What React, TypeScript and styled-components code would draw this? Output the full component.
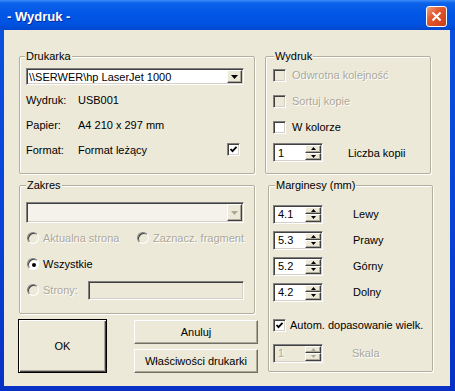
import React from "react";
import styled, { createGlobalStyle } from "styled-components";

const GlobalStyle = createGlobalStyle`
    html, body {
        margin: 0;
        padding: 0;
    }
    body {
        width: 455px;
        height: 391px;
        overflow: hidden;
        background: #ece9d8;
        font-family: "Liberation Sans", Arial, sans-serif;
        font-size: 11px;
        color: #000;
    }
`;

const Window = styled.div`
    width: 455px;
    height: 391px;
    display: flex;
    flex-direction: column;
    background: linear-gradient(to bottom, #0a52e0 0%, #0842d6 60%, #0731c4 100%);
`;

const TitleBar = styled.div`
    height: 30px;
    flex: none;
    display: flex;
    align-items: center;
    padding-left: 7px;
    background: linear-gradient(
        to bottom,
        #3c8cf8 0%,
        #0d62ea 10%,
        #0056e6 45%,
        #0053e0 80%,
        #0047cf 100%
    );
`;

const Title = styled.span`
    font-weight: bold;
    font-size: 13px;
    color: #fff;
    text-shadow: 1px 1px 0 #0a2a9a;
    margin-top: 2px;
`;

const CloseButton = styled.div`
    margin-left: auto;
    margin-right: 8px;
    width: 21px;
    height: 21px;
    box-sizing: border-box;
    border: 1px solid #fff;
    border-radius: 3px;
    background: linear-gradient(135deg, #f0a080 0%, #e3582d 40%, #c83c18 100%);
    display: flex;
    align-items: center;
    justify-content: center;
    margin-top: 2px;
`;

const Client = styled.div`
    flex: 1;
    margin: 0 5px 5px 4px;
    background: #ece9d8;
    display: flex;
    gap: 10px;
    padding: 26px 17px 0 15px;
`;

const LeftColumn = styled.div`
    width: 236px;
    display: flex;
    flex-direction: column;
`;

const RightColumn = styled.div`
    width: 168px;
    display: flex;
    flex-direction: column;
`;

const Group = styled.div<{ $h: number; $w?: number; $mt?: number; $ml?: number }>`
    position: relative;
    box-sizing: border-box;
    height: ${(p) => p.$h}px;
    width: ${(p) => (p.$w ? `${p.$w}px` : "auto")};
    margin-top: ${(p) => p.$mt ?? 0}px;
    margin-left: ${(p) => p.$ml ?? 0}px;
    border: 1px solid #b3af9f;
    border-radius: 2px;
    box-shadow: inset 1px 1px 0 #fff, 1px 1px 0 #fff;
    display: flex;
    flex-direction: column;
`;

const Legend = styled.span<{ $lx: number }>`
    position: absolute;
    top: -7px;
    left: ${(p) => p.$lx}px;
    padding: 0 1px;
    line-height: 13px;
    background: #ece9d8;
`;

const GroupBody = styled.div<{ $pad: string }>`
    padding: ${(p) => p.$pad};
    display: flex;
    flex-direction: column;
`;

const sunken = `
    border: 1px solid;
    border-color: #808080 #fff #fff #808080;
    box-shadow: inset 1px 1px 0 #404040, inset -1px -1px 0 #d4d0c8;
`;

const raised = `
    border: 1px solid;
    border-color: #fff #404040 #404040 #fff;
    box-shadow: inset -1px -1px 0 #aca899;
`;

const Combo = styled.div<{ $h: number; $disabled?: boolean }>`
    display: flex;
    height: ${(p) => p.$h}px;
    box-sizing: border-box;
    ${sunken}
    background: ${(p) => (p.$disabled ? "#f4f2ea" : "#fff")};
    padding: 1px;
`;

const ComboText = styled.span`
    flex: 1;
    display: flex;
    align-items: center;
    padding-left: 1px;
    white-space: nowrap;
`;

const ComboButton = styled.span`
    width: 15px;
    box-sizing: border-box;
    background: #ece9d8;
    ${raised}
    display: flex;
    align-items: center;
    justify-content: center;
`;

const InfoRow = styled.div<{ $mt?: number }>`
    height: 25px;
    display: flex;
    align-items: center;
    margin-top: ${(p) => p.$mt ?? 0}px;
`;

const InfoLabel = styled.span`
    width: 52px;
`;

const Row = styled.div<{ $h?: number; $mt?: number }>`
    height: ${(p) => p.$h ?? 26}px;
    margin-top: ${(p) => p.$mt ?? 0}px;
    display: flex;
    align-items: center;
`;

const Text = styled.span<{ $disabled?: boolean; $ml?: number }>`
    margin-left: ${(p) => p.$ml ?? 0}px;
    white-space: nowrap;
    color: ${(p) => (p.$disabled ? "#aca899" : "#000")};
    text-shadow: ${(p) => (p.$disabled ? "1px 1px 0 #fff" : "none")};
`;

const CheckBox = styled.span<{ $disabled?: boolean; $ml?: string; $mr?: number }>`
    width: 13px;
    height: 13px;
    flex: none;
    box-sizing: border-box;
    ${sunken}
    background: ${(p) => (p.$disabled ? "#ece9d8" : "#fff")};
    display: flex;
    align-items: center;
    justify-content: center;
    margin-left: ${(p) => p.$ml ?? "0"};
    margin-right: ${(p) => p.$mr ?? 0}px;
`;

const RadioCircle = styled.span<{ $disabled?: boolean }>`
    width: 12px;
    height: 12px;
    flex: none;
    box-sizing: border-box;
    border-radius: 50%;
    border: 1px solid;
    border-color: #808080 #fff #fff #808080;
    box-shadow: inset 1px 1px 0 #404040;
    background: ${(p) => (p.$disabled ? "#ece9d8" : "#fff")};
    display: flex;
    align-items: center;
    justify-content: center;
    margin-left: 1px;
`;

const RadioDot = styled.span`
    width: 4px;
    height: 4px;
    border-radius: 50%;
    background: #000;
    margin: 1px 0 0 1px;
`;

const RadioCell = styled.div<{ $w?: number }>`
    width: ${(p) => (p.$w ? `${p.$w}px` : "auto")};
    display: flex;
    align-items: center;
    gap: 4px;
`;

const TextField = styled.div`
    margin-left: auto;
    width: 156px;
    height: 19px;
    box-sizing: border-box;
    ${sunken}
    background: #ece9d8;
`;

const Spin = styled.div<{ $disabled?: boolean }>`
    width: 50px;
    height: 19px;
    flex: none;
    box-sizing: border-box;
    ${sunken}
    background: ${(p) => (p.$disabled ? "#ece9d8" : "#fff")};
    padding: 1px;
    display: flex;
`;

const SpinValue = styled.span<{ $disabled?: boolean }>`
    flex: 1;
    display: flex;
    align-items: center;
    padding-left: 3px;
    color: ${(p) => (p.$disabled ? "#aca899" : "#000")};
    text-shadow: ${(p) => (p.$disabled ? "1px 1px 0 #fff" : "none")};
`;

const SpinButtons = styled.div`
    width: 16px;
    display: flex;
    flex-direction: column;
`;

const SpinButton = styled.span`
    flex: 1;
    box-sizing: border-box;
    background: #ece9d8;
    ${raised}
    display: flex;
    align-items: center;
    justify-content: center;
`;

const ButtonRow = styled.div`
    margin-top: 5px;
    margin-left: -1px;
    display: flex;
    gap: 27px;
    width: 240px;
`;

const ButtonStack = styled.div`
    display: flex;
    flex-direction: column;
    gap: 5px;
    margin-top: 1px;
`;

const Button = styled.div<{ $w: number; $h: number; $default?: boolean }>`
    width: ${(p) => p.$w}px;
    height: ${(p) => p.$h}px;
    box-sizing: border-box;
    background: #ece9d8;
    display: flex;
    align-items: center;
    justify-content: center;
    border: 1px solid;
    border-color: ${(p) => (p.$default ? "#000" : "#fff #716f64 #716f64 #fff")};
    box-shadow: ${(p) =>
        p.$default
            ? "inset 1px 1px 0 #fff, inset -1px -1px 0 #404040, inset -2px -2px 0 #aca899"
            : "inset -1px -1px 0 #aca899"};
`;

const Arrow: React.FC<{ up?: boolean; disabled?: boolean; size?: number }> = ({ up, disabled, size = 7 }) => (
    <svg width={size} height={Math.ceil(size / 2)} viewBox={`0 0 ${size} ${Math.ceil(size / 2)}`}>
        <polygon
            points={
                up
                    ? `0,${Math.ceil(size / 2)} ${size},${Math.ceil(size / 2)} ${size / 2},0`
                    : `0,0 ${size},0 ${size / 2},${Math.ceil(size / 2)}`
            }
            fill={disabled ? "#aca899" : "#000"}
        />
    </svg>
);

const CheckMark = () => (
    <svg width="9" height="9" viewBox="0 0 9 9">
        <polyline points="1.5,4 3.5,6.2 7.5,1.8" fill="none" stroke="#000" strokeWidth="1.8" />
    </svg>
);

const SpinBox: React.FC<{ value: string; disabled?: boolean }> = ({ value, disabled }) => (
    <Spin $disabled={disabled}>
        <SpinValue $disabled={disabled}>{value}</SpinValue>
        <SpinButtons>
            <SpinButton>
                <Arrow up size={5} disabled={disabled} />
            </SpinButton>
            <SpinButton>
                <Arrow size={5} disabled={disabled} />
            </SpinButton>
        </SpinButtons>
    </Spin>
);

const margins = [
    { value: "4.1", label: "Lewy" },
    { value: "5.3", label: "Prawy" },
    { value: "5.2", label: "Górny" },
    { value: "4.2", label: "Dolny" },
];

export default function App() {
    return (
        <>
            <GlobalStyle />
            <Window>
                <TitleBar>
                    <Title>- Wydruk -</Title>
                    <CloseButton>
                        <svg width="11" height="11" viewBox="0 0 11 11">
                            <path d="M1.5 1.5 L9.5 9.5 M9.5 1.5 L1.5 9.5" stroke="#fff" strokeWidth="2" />
                        </svg>
                    </CloseButton>
                </TitleBar>
                <Client>
                    <LeftColumn>
                        <Group $h={118}>
                            <Legend $lx={5}>Drukarka</Legend>
                            <GroupBody $pad="11px 10px 0 6px">
                                <Combo $h={17}>
                                    <ComboText>{"\\\\SERWER\\hp LaserJet 1000"}</ComboText>
                                    <ComboButton>
                                        <Arrow />
                                    </ComboButton>
                                </Combo>
                                <InfoRow $mt={2}>
                                    <InfoLabel>Wydruk:</InfoLabel>
                                    <span>USB001</span>
                                </InfoRow>
                                <InfoRow>
                                    <InfoLabel>Papier:</InfoLabel>
                                    <span>A4 210 x 297 mm</span>
                                </InfoRow>
                                <InfoRow>
                                    <InfoLabel>Format:</InfoLabel>
                                    <span>Format leżący</span>
                                    <CheckBox $ml="auto" $mr={4}>
                                        <CheckMark />
                                    </CheckBox>
                                </InfoRow>
                            </GroupBody>
                        </Group>
                        <Group $h={129} $mt={11}>
                            <Legend $lx={6}>Zakres</Legend>
                            <GroupBody $pad="16px 10px 0 6px">
                                <Combo $h={21} $disabled>
                                    <ComboText />
                                    <ComboButton>
                                        <Arrow disabled />
                                    </ComboButton>
                                </Combo>
                                <Row $mt={2}>
                                    <RadioCell $w={116}>
                                        <RadioCircle $disabled />
                                        <Text $disabled>Aktualna strona</Text>
                                    </RadioCell>
                                    <RadioCell>
                                        <RadioCircle $disabled />
                                        <Text $disabled>Zaznacz. fragment</Text>
                                    </RadioCell>
                                </Row>
                                <Row>
                                    <RadioCell>
                                        <RadioCircle>
                                            <RadioDot />
                                        </RadioCircle>
                                        <Text>Wszystkie</Text>
                                    </RadioCell>
                                </Row>
                                <Row>
                                    <RadioCell>
                                        <RadioCircle $disabled />
                                        <Text $disabled>Strony:</Text>
                                    </RadioCell>
                                    <TextField />
                                </Row>
                            </GroupBody>
                        </Group>
                        <ButtonRow>
                            <Button $w={89} $h={54} $default>
                                OK
                            </Button>
                            <ButtonStack>
                                <Button $w={124} $h={24}>
                                    Anuluj
                                </Button>
                                <Button $w={124} $h={24}>
                                    Właściwości drukarki
                                </Button>
                            </ButtonStack>
                        </ButtonRow>
                    </LeftColumn>
                    <RightColumn>
                        <Group $h={118} $w={166}>
                            <Legend $lx={8}>Wydruk</Legend>
                            <GroupBody $pad="5px 0 0 7px">
                                <Row>
                                    <CheckBox $disabled />
                                    <Text $disabled $ml={6}>
                                        Odwrotna kolejność
                                    </Text>
                                </Row>
                                <Row>
                                    <CheckBox $disabled />
                                    <Text $disabled $ml={6}>
                                        Sortuj kopie
                                    </Text>
                                </Row>
                                <Row>
                                    <CheckBox />
                                    <Text $ml={6}>W kolorze</Text>
                                </Row>
                                <Row $h={25}>
                                    <SpinBox value="1" />
                                    <Text $ml={25}>Liczba kopii</Text>
                                </Row>
                            </GroupBody>
                        </Group>
                        <Group $h={187} $w={165} $mt={11} $ml={3}>
                            <Legend $lx={6}>Marginesy (mm)</Legend>
                            <GroupBody $pad="15px 0 0 4px">
                                {margins.map((m) => (
                                    <Row key={m.label}>
                                        <SpinBox value={m.value} />
                                        <Text $ml={30}>{m.label}</Text>
                                    </Row>
                                ))}
                                <Row $mt={7}>
                                    <CheckBox>
                                        <CheckMark />
                                    </CheckBox>
                                    <Text $ml={4}>Autom. dopasowanie wielk.</Text>
                                </Row>
                                <Row $mt={2}>
                                    <SpinBox value="1" disabled />
                                    <Text $disabled $ml={29}>
                                        Skala
                                    </Text>
                                </Row>
                            </GroupBody>
                        </Group>
                    </RightColumn>
                </Client>
            </Window>
        </>
    );
}
